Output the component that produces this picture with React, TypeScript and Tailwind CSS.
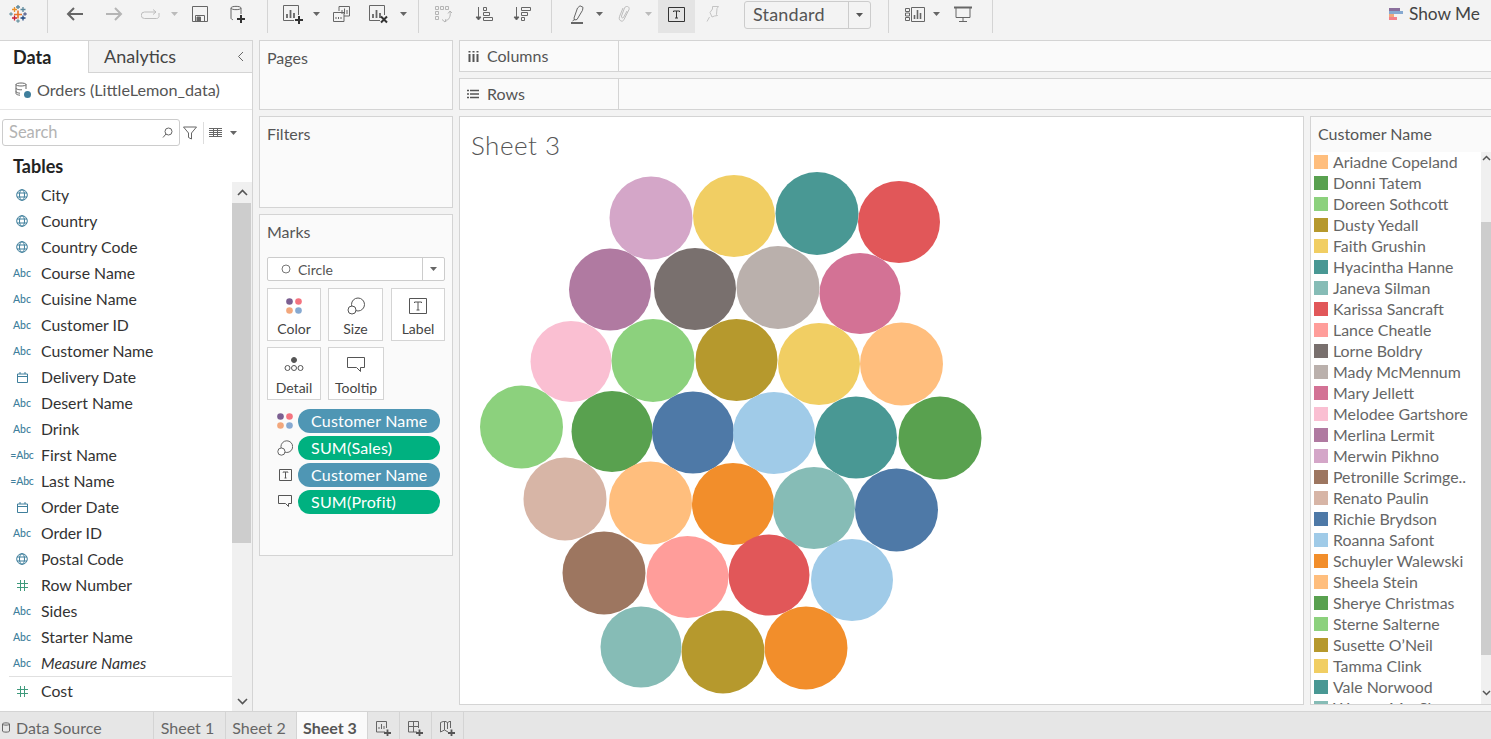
import React from "react";

const S = { fill: "none", stroke: "currentColor", strokeWidth: 1 };

function Ico({ w = 18, h = 18, vb, children, className = "" }: { w?: number; h?: number; vb?: string; children: React.ReactNode; className?: string }) {
  return (
    <svg width={w} height={h} viewBox={vb ?? `0 0 ${w} ${h}`} className={className} {...S}>
      {children}
    </svg>
  );
}

function Caret({ className = "text-[#666]" }: { className?: string }) {
  return (
    <svg width="7" height="4" viewBox="0 0 7 4" className={className}>
      <path d="M0 0h7L3.5 4z" fill="currentColor" />
    </svg>
  );
}

function Slot({ w, children, className = "" }: { w: string; children?: React.ReactNode; className?: string }) {
  return <div className={`flex h-[33px] shrink-0 items-center justify-center pb-[5px] ${w} ${className}`}>{children}</div>;
}

function Sep({ className = "" }: { className?: string }) {
  return <div className={`h-[33px] w-px shrink-0 bg-[#d4d4d4] ${className}`} />;
}

function Logo() {
  const c = (x: number, y: number, r: number, color: string, sw = 1.3) => (
    <path d={`M${x - r} ${y}h${2 * r}M${x} ${y - r}v${2 * r}`} stroke={color} strokeWidth={sw} />
  );
  return (
    <svg width="18" height="18" viewBox="0 0 18 18" fill="none">
      {c(9, 9.500, 4, "#e8762b", 1.600)}
      {c(5.500, 4.500, 2.500, "#eb9129")}
      {c(9, 2, 2, "#5b879b")}
      {c(14, 4.500, 2.500, "#5b879b")}
      {c(5.500, 13, 2.500, "#c72035")}
      {c(14, 13, 2.500, "#1f457e")}
      {c(2, 9, 1.700, "#7099a6")}
      {c(16, 9, 1.700, "#5b6591")}
      {c(9, 16, 1.700, "#7099a6")}
    </svg>
  );
}

function ChartIcon({ add, x }: { add?: boolean; x?: boolean }) {
  return (
    <Ico w={20} h={19} className="text-[#666]">
      <path d="M11 15.500H.5V.5h15V10" />
      <path d="M4 13V9M7.500 13V5M11 13V8" strokeWidth="1.800" />
      {add && <path d="M12 15h8M16 11v8" stroke="#333" strokeWidth="2" />}
      {x && <path d="M12 11.500l6 6M18 11.500l-6 6" stroke="#333" strokeWidth="2" />}
    </Ico>
  );
}

function Toolbar() {
  return (
    <div className="flex h-10 shrink-0 items-start bg-[#f3f3f3]">
      <Slot w="w-9"><Logo /></Slot>
      <div className="w-[11px] shrink-0" />
      <Sep />
      <div className="w-[6px] shrink-0" />
      <Slot w="w-10">
        <Ico w={17} h={14} className="text-[#666]"><path d="M17 7H2M8 1 2 7l6 6" strokeWidth="2" /></Ico>
      </Slot>
      <Slot w="w-10">
        <Ico w={17} h={14} className="text-[#b5b5b5]"><path d="M0 7h15M9 1l6 6-6 6" strokeWidth="2" /></Ico>
      </Slot>
      <Slot w="w-8">
        <Ico w={19} h={11} className="text-[#bdbdbd]"><path d="M15 3H3.500a2.500 2.500 0 0 0 0 6.500h12a2.500 2.500 0 0 0 2.500-3V4M12 .5 15 3l-3 2.500" /></Ico>
      </Slot>
      <Slot w="w-4"><Caret className="text-[#bbb]" /></Slot>
      <Slot w="w-9">
        <Ico w={16} h={16} className="text-[#666]"><path d="M.5.5h15v15H.5z" /><path d="M3.500 15.500v-6h9v6" /><path d="M5 11h3.500v4H5z" fill="#666" /></Ico>
      </Slot>
      <Slot w="w-10">
        <Ico w={16} h={18} className="text-[#666]">
          <path d="M1 3C1 .8 11 .8 11 3V9M1 3c0 2.200 10 2.200 10 0M1 3v10c0 1 1 1.500 2 1.700" />
          <path d="M7 14h8M11 10v8" stroke="#333" strokeWidth="2" />
        </Ico>
      </Slot>
      <div className="w-[9px] shrink-0" />
      <Sep />
      <div className="w-[6px] shrink-0" />
      <Slot w="w-[38px]"><ChartIcon add /></Slot>
      <Slot w="w-2"><Caret /></Slot>
      <Slot w="w-[42px]">
        <Ico w={17} h={16} className="text-[#666]">
          <path d="M6 5V.5h10.500v9.500H11" /><path d="M.5 6.500H11v9H.5z" />
          <path d="M9 8V4M11.500 8V2.500M14 8V4M3 13v-2M5.500 13v-2M8 13v-2" />
        </Ico>
      </Slot>
      <Slot w="w-[34px]"><ChartIcon x /></Slot>
      <Slot w="w-[14px]"><Caret /></Slot>
      <div className="w-2 shrink-0" />
      <Sep />
      <Slot w="w-12">
        <Ico w={17} h={17} className="text-[#b5b5b5]">
          <path d="M.5.5h3v3h-3zM5.500.5h3v3h-3zM10.500.5h3v3h-3zM.5 5.500h3v3h-3zM.5 10.500h3v3h-3z" />
          <path d="M15 6c1 4-1 8-5 9.500M7 13.500l3 2.500 1-3M13 7.500 15 5l2 2" />
        </Ico>
      </Slot>
      <Slot w="w-[34px]">
        <Ico w={18} h={16} className="text-[#666]">
          <path d="M3.500 1v12" /><path d="M1 11h5l-2.500 3z" fill="#555" /><path d="M8.500 1.500h3v3h-3zM8.500 6.500h6v3h-6zM8.500 11.500h9v3h-9z" />
        </Ico>
      </Slot>
      <Slot w="w-[42px]">
        <Ico w={18} h={16} className="text-[#666]">
          <path d="M3.500 1v12" /><path d="M1 11h5l-2.500 3z" fill="#555" /><path d="M8.500 1.500h9v3h-9zM8.500 6.500h6v3h-6zM8.500 11.500h3v3h-3z" />
        </Ico>
      </Slot>
      <div className="w-2 shrink-0" />
      <Sep />
      <div className="w-[9px] shrink-0" />
      <Slot w="w-8">
        <Ico w={13} h={19} className="text-[#666]">
          <path d="M3 13 6.500 3 9 .8l3 1.500-.5 3L6 14.500l-2.500.5zM1.500 16l2-1.500" />
          <path d="M0 18h12" strokeWidth="2" />
        </Ico>
      </Slot>
      <Slot w="w-3"><Caret /></Slot>
      <Slot w="w-[38px]">
        <Ico w={12} h={17} className="text-[#bdbdbd]"><path d="M5 2 1.500 10.500c-1.500 4 3 6.500 4.500 3l5-10c1-3-3-4.500-4.500-1.500L3.500 10c-.5 1.500 1 2.500 2 1.500L9 5" /></Ico>
      </Slot>
      <Slot w="w-[10px]"><Caret className="text-[#bbb]" /></Slot>
      <div className="w-[5px] shrink-0" />
      <Slot w="w-[37px]" className="bg-[#e4e4e4]">
        <Ico w={17} h={15} className="text-[#333]"><path d="M.5.500h16v14H.5z" /><path d="M5.500 5V4h6v1M8.500 4v7M7 11h3" /></Ico>
      </Slot>
      <Slot w="w-[34px]">
        <Ico w={13} h={16} className="text-[#c4c4c4]"><path d="M6.500.5h6l-1.500 2-.5 6 1 1-3 .5-2.500 1-2-4.500L6.500 3zM3.500 11 1 15.500" /></Ico>
      </Slot>
      <div className="w-[15px] shrink-0" />
      <div className="mt-px flex h-[28px] w-[127px] shrink-0 items-center rounded-[3px] border border-[#ccc] text-[18px] text-[#555]">
        <span className="flex-1 pb-[2px] pl-2 leading-none tracking-[0.2px]">Standard</span>
        <div className="flex h-full w-[22px] items-center justify-center border-l border-[#ccc]"><Caret className="text-[#555]" /></div>
      </div>
      <div className="w-[17px] shrink-0" />
      <Sep />
      <div className="w-[10px] shrink-0" />
      <Slot w="w-8">
        <Ico w={20} h={15} className="text-[#666]">
          <path d="M.5 1.500h4v3h-4zM.5 6h4v3h-4zM.5 10.500h4v3h-4zM6.500.5h13v14h-13z" />
          <path d="M9.500 12V8M12.500 12V3M15.500 12V6" strokeWidth="1.600" />
        </Ico>
      </Slot>
      <Slot w="w-[10px]"><Caret /></Slot>
      <Slot w="w-11">
        <Ico w={18} h={17} className="text-[#666]"><path d="M0 1.500h18" strokeWidth="2" /><path d="M2 2v9.500h14V2M9 11.500v4M5 15.500h8" /></Ico>
      </Slot>
      <div className="w-[7px] shrink-0" />
      <Sep />
      <div className="ml-auto flex h-7 items-center gap-[6px] pr-[11px] text-[17.3px] text-[#444]">
        <div className="flex w-[14px] flex-col">
          <div className="h-[3px] w-[11px] bg-[#8a6f9c]" />
          <div className="h-[3px] w-[14px] bg-[#86a9d1]" />
          <div className="h-[3px] w-[5px] bg-[#f2a77c]" />
          <div className="h-[3px] w-[8px] bg-[#f4808a]" />
        </div>
        <span className="leading-none">Show Me</span>
      </div>
    </div>
  );
}

type FieldKind = "geo" | "abc" | "date" | "calc" | "num";
const fields: [FieldKind, string][] = [
  ["geo", "City"], ["geo", "Country"], ["geo", "Country Code"], ["abc", "Course Name"], ["abc", "Cuisine Name"],
  ["abc", "Customer ID"], ["abc", "Customer Name"], ["date", "Delivery Date"], ["abc", "Desert Name"], ["abc", "Drink"],
  ["calc", "First Name"], ["calc", "Last Name"], ["date", "Order Date"], ["abc", "Order ID"], ["geo", "Postal Code"],
  ["num", "Row Number"], ["abc", "Sides"], ["abc", "Starter Name"],
];

function FieldIcon({ kind }: { kind: FieldKind }) {
  if (kind === "abc") return <span className="text-[10.5px] leading-none font-medium text-[#3f7f9c]">Abc</span>;
  if (kind === "calc") return <span className="text-[10.5px] leading-none font-medium text-[#3f7f9c] tracking-[-0.2px]">=Abc</span>;
  if (kind === "geo")
    return (
      <Ico w={12} h={12} className="text-[#3f7f9c]">
        <circle cx="6" cy="6" r="5.300" /><ellipse cx="6" cy="6" rx="2.500" ry="5.300" /><path d="M1 4h10M1 8h10" />
      </Ico>
    );
  if (kind === "date")
    return (
      <Ico w={11} h={11} className="text-[#3f7f9c]"><path d="M.5 2h10v8.500H.5zM.5 4.500h10M3 0v2M8 0v2" /></Ico>
    );
  return (
    <Ico w={11} h={11} className="text-[#3f9a7c]"><path d="M3.500 0v11M7.500 0v11M0 3.500h11M0 7.500h11" /></Ico>
  );
}

function FieldRow({ kind, name, italic }: { kind: FieldKind; name: string; italic?: boolean }) {
  return (
    <div className="flex h-[26px] items-center">
      <div className="flex w-[41px] justify-end pr-[9px]"><div className="flex w-[20px] justify-center"><FieldIcon kind={kind} /></div></div>
      <span className={`text-[15.8px] text-[#333] ${italic ? "italic" : ""}`}>{name}</span>
    </div>
  );
}

function LeftPanel() {
  return (
    <div className="flex w-[253px] shrink-0 flex-col border-t border-r border-[#d4d4d4] bg-white">
      <div className="flex h-[32px] shrink-0">
        <div className="flex w-[88px] items-center pl-[13px] text-[18px] font-bold text-[#222]">Data</div>
        <div className="flex flex-1 items-center justify-between border-b border-l border-[#d4d4d4] bg-[#f3f3f3] pl-[15px] pr-2 text-[18px] text-[#444]">
          <span>Analytics</span>
          <Ico w={7} h={11} className="text-[#666]"><path d="M6 1 1.500 5.500 6 10" /></Ico>
        </div>
      </div>
      <div className="flex h-[37px] shrink-0 items-center gap-[6px] border-b border-[#e6e6e6] pb-px pl-[15px] text-[16.2px] text-[#555]">
        <Ico w={16} h={17} className="text-[#666]">
          <path d="M1 2.500C1 .5 11 .5 11 2.500V7M1 2.500c0 2 10 2 10 0M1 2.500v9c0 1 2 1.500 4 1.700M1 6c0 1.500 4 2 6 1.700M1 9.500c0 1 2 1.500 4 1.700" />
          <circle cx="12.500" cy="12.500" r="3.500" fill="#3f7f9c" stroke="none" />
        </Ico>
        <span>Orders (LittleLemon_data)</span>
      </div>
      <div className="flex h-[44px] shrink-0 items-center pl-[2px] pt-[1px]">
        <div className="flex h-[27px] w-[178px] items-center justify-between rounded-[3px] border border-[#ccc] pl-[6px] pr-[6px] text-[16.500px] text-[#b3b3b3]">
          <span>Search</span>
          <Ico w={11} h={11} className="text-[#666]"><circle cx="6.500" cy="4.500" r="3.500" /><path d="M4 7l-3 3.500" /></Ico>
        </div>
        <div className="ml-[2px] flex w-[16px] justify-center">
          <Ico w={14} h={14} className="text-[#666]"><path d="M.5 1h13L8.500 7v6l-3-1.500V7z" /></Ico>
        </div>
        <div className="ml-[5px] h-[22px] w-px bg-[#ddd]" />
        <div className="ml-[5px]">
          <Ico w={13} h={9} className="text-[#666]"><path d="M0 .5h13M0 2.500h13M0 4.500h13M0 6.500h13M0 8.500h13M4.500 0v9M8.500 0v9" /></Ico>
        </div>
        <div className="ml-[8px]"><Caret /></div>
      </div>
      <div className="flex h-[28px] shrink-0 items-center pl-[13px] pb-[4px] text-[18px] font-bold text-[#222]">Tables</div>
      <div className="flex min-h-0 flex-1">
        <div className="w-[232px] shrink-0 overflow-hidden">
          {fields.map(([k, n]) => <FieldRow key={n} kind={k} name={n} />)}
          <FieldRow kind="abc" name="Measure Names" italic />
          <div className="ml-[9px] h-px bg-[#e0e0e0]" />
          <div className="pt-[1px]"><FieldRow kind="num" name="Cost" /></div>
        </div>
        <div className="flex w-5 flex-col bg-[#f0f0f0]">
          <div className="flex h-[21px] items-center justify-center">
            <Ico w={11} h={7} className="text-[#555]"><path d="M1 6l4.500-4.500L10 6" strokeWidth="1.600" /></Ico>
          </div>
          <div className="h-[340px] w-[19px] bg-[#cdcdcd]" />
          <div className="flex flex-1 items-end justify-center pb-[6px]">
            <Ico w={11} h={7} className="text-[#555]"><path d="M1 1l4.500 4.500L10 1" strokeWidth="1.600" /></Ico>
          </div>
        </div>
      </div>
    </div>
  );
}

function Card({ label, w, children }: { label: string; w: string; children: React.ReactNode }) {
  return (
    <div className={`flex h-[53px] flex-col items-center border border-[#d4d4d4] bg-white text-[14px] text-[#444] ${w}`}>
      <div className="flex h-[31px] items-center justify-center pt-[2px]">{children}</div>
      <span className="leading-[17px]">{label}</span>
    </div>
  );
}

function Dots() {
  return (
    <svg width="16" height="16" viewBox="0 0 16 16">
      <circle cx="3.500" cy="3.500" r="3.300" fill="#7b5f91" />
      <circle cx="12.500" cy="3.500" r="3.300" fill="#f4737f" />
      <circle cx="3.500" cy="12.500" r="3.300" fill="#f2a77c" />
      <circle cx="12.500" cy="12.500" r="3.300" fill="#86a9d1" />
    </svg>
  );
}

const SizeIcon = () => (
  <Ico w={18} h={18} className="text-[#555]"><circle cx="11" cy="7.500" r="6.500" /><circle cx="5" cy="13" r="4" fill="#fff" /></Ico>
);
const LabelIcon = () => (
  <Ico w={18} h={16} className="text-[#555]"><path d="M.5.5h17v15H.5z" /><path d="M5.500 5V4h7v1M9 4v8M7.500 12h3" /></Ico>
);
const TipIcon = () => (
  <Ico w={18} h={16} className="text-[#555]"><path d="M.5.5h17v10h-4v4l-4-4H.5z" /></Ico>
);

function Pill({ icon, label, green }: { icon: React.ReactNode; label: string; green?: boolean }) {
  return (
    <div className="flex h-[27px] items-center">
      <div className="flex w-[38px] justify-end pr-[5px]"><div className="flex w-[16px] justify-center">{icon}</div></div>
      <div className={`flex h-6 w-[142px] items-center rounded-full pl-[13px] text-[16px] tracking-[0.2px] text-white ${green ? "bg-[#00b180]" : "bg-[#4f96b4]"}`}>{label}</div>
    </div>
  );
}

function ShelfTitle({ children, h }: { children: string; h: string }) {
  return <div className={`border border-[#d4d4d4] bg-[#fafafa] pl-[7px] pt-[7px] text-[16px] leading-5 text-[#555] ${h}`}>{children}</div>;
}

function MiddlePanel() {
  return (
    <div className="ml-[6px] flex w-[194px] shrink-0 flex-col gap-[6px]">
      <ShelfTitle h="h-[70px]">Pages</ShelfTitle>
      <ShelfTitle h="h-[92px]">Filters</ShelfTitle>
      <div className="flex h-[342px] flex-col border border-[#d4d4d4] bg-[#fafafa] px-[7px]">
        <div className="h-[42px] pt-[7px] text-[16px] leading-5 text-[#555]">Marks</div>
        <div className="flex h-6 w-[178px] items-center rounded-[2px] border border-[#ccc] bg-white text-[14px] text-[#555]">
          <Ico w={10} h={10} className="ml-[13px] text-[#777]"><circle cx="5" cy="5" r="4" /></Ico>
          <span className="ml-[7px] flex-1">Circle</span>
          <div className="flex h-full w-[22px] items-center justify-center border-l border-[#ccc]"><Caret /></div>
        </div>
        <div className="mt-[7px] flex gap-[7px]">
          <Card label="Color" w="w-[54px]"><Dots /></Card>
          <Card label="Size" w="w-[55px]"><SizeIcon /></Card>
          <Card label="Label" w="w-[54px] ml-px"><LabelIcon /></Card>
        </div>
        <div className="mt-[6px] flex gap-[7px]">
          <Card label="Detail" w="w-[54px]">
            <Ico w={20} h={15} className="text-[#555]">
              <circle cx="10" cy="3" r="2.500" fill="#555" /><circle cx="3.500" cy="11" r="2.500" /><circle cx="10" cy="11" r="2.500" /><circle cx="16.500" cy="11" r="2.500" />
            </Ico>
          </Card>
          <Card label="Tooltip" w="w-[56px]"><TipIcon /></Card>
        </div>
        <div className="-ml-[7px] mt-[7px]">
          <Pill icon={<Dots />} label="Customer Name" />
          <Pill icon={<div className="scale-90"><SizeIcon /></div>} label="SUM(Sales)" green />
          <Pill icon={<Ico w={13} h={12} className="text-[#555]"><path d="M.5.5h12v11H.5z" /><path d="M4 3.500V3h5v.5M6.500 3v6M5.500 9h2" /></Ico>} label="Customer Name" />
          <Pill icon={<Ico w={14} h={13} className="text-[#555]"><path d="M.5.5h13v8h-3v3l-3-3H.5z" /></Ico>} label="SUM(Profit)" green />
        </div>
      </div>
    </div>
  );
}

function RowShelf({ label, icon }: { label: string; icon: React.ReactNode }) {
  return (
    <div className="flex h-[32px] shrink-0 border border-r-0 border-[#d4d4d4] bg-[#fafafa]">
      <div className="flex w-[159px] items-center border-r border-[#d4d4d4] pl-[7px] text-[16px] text-[#555]">
        <div className="flex w-[12px] justify-center">{icon}</div>
        <span className="ml-[8px]">{label}</span>
      </div>
    </div>
  );
}

const circles: [number, number, number, string][] = [
  [651, 218, 41.5, "#d4a6c8"], [734, 216, 41, "#f1ce63"], [817, 213.500, 41.500, "#499894"], [899, 222, 41, "#e15759"],
  [610, 289.500, 41, "#b07aa1"], [695, 289, 41, "#79706e"], [778, 287.500, 41.500, "#bab0ac"], [860, 293.500, 40.500, "#d37295"],
  [571, 361.500, 40.500, "#fabfd2"], [653, 360.500, 41.500, "#8cd17d"], [736.500, 360, 41, "#b6992d"], [819, 364, 41, "#f1ce63"], [901.500, 364, 41.500, "#ffbe7d"],
  [521.500, 427, 41.500, "#8cd17d"], [612, 431.500, 40.500, "#59a14f"], [693, 432.500, 41, "#4e79a7"], [774, 433, 41, "#a0cbe8"], [856, 437.500, 41, "#499894"], [940, 438, 41.500, "#59a14f"],
  [565, 499, 41.500, "#d7b5a6"], [650.500, 503, 41.500, "#ffbe7d"], [733, 504, 41, "#f28e2b"], [814, 508, 41, "#86bcb6"], [896.500, 510, 41.500, "#4e79a7"],
  [604, 573, 41.500, "#9d7660"], [687.500, 577, 41, "#ff9d9a"], [769, 575, 40.500, "#e15759"], [852, 580, 41, "#a0cbe8"],
  [641, 647, 40.500, "#86bcb6"], [723, 652, 41.500, "#b6992d"], [806, 648, 41.500, "#f28e2b"],
];

const legend: [string, string][] = [
  ["#ffbe7d", "Ariadne Copeland"], ["#59a14f", "Donni Tatem"], ["#8cd17d", "Doreen Sothcott"], ["#b6992d", "Dusty Yedall"],
  ["#f1ce63", "Faith Grushin"], ["#499894", "Hyacintha Hanne"], ["#86bcb6", "Janeva Silman"], ["#e15759", "Karissa Sancraft"],
  ["#ff9d9a", "Lance Cheatle"], ["#79706e", "Lorne Boldry"], ["#bab0ac", "Mady McMennum"], ["#d37295", "Mary Jellett"],
  ["#fabfd2", "Melodee Gartshore"], ["#b07aa1", "Merlina Lermit"], ["#d4a6c8", "Merwin Pikhno"], ["#9d7660", "Petronille Scrimge.."],
  ["#d7b5a6", "Renato Paulin"], ["#4e79a7", "Richie Brydson"], ["#a0cbe8", "Roanna Safont"], ["#f28e2b", "Schuyler Walewski"],
  ["#ffbe7d", "Sheela Stein"], ["#59a14f", "Sherye Christmas"], ["#8cd17d", "Sterne Salterne"], ["#b6992d", "Susette O’Neil"],
  ["#f1ce63", "Tamma Clink"], ["#499894", "Vale Norwood"], ["#86bcb6", "Warren MacShane"],
];

function SheetArea() {
  return (
    <div className="flex min-h-0 flex-1 gap-[6px] pb-[6px]">
      <div className="flex w-[845px] shrink-0 flex-col border border-[#d4d4d4] bg-white">
        <div className="h-[51px] shrink-0 pl-[11px] pt-[10px] text-[26px] font-light leading-9 tracking-[0.5px] text-[#555]">Sheet 3</div>
        <svg width="843" height="536" viewBox="460 168 843 536">
          {circles.map(([x, y, r, c], i) => <circle key={i} cx={x} cy={y} r={r} fill={c} />)}
        </svg>
      </div>
      <div className="flex min-w-0 flex-1 flex-col border-y border-l border-[#d4d4d4] bg-[#fafafa]">
        <div className="h-[35px] shrink-0 pl-[7px] pt-[7px] text-[16px] leading-5 text-[#555]">Customer Name</div>
        <div className="flex min-h-0 flex-1">
          <div className="w-[170px] shrink-0 overflow-hidden bg-white">
            {legend.map(([c, n]) => (
              <div key={n} className="-mt-px flex h-[22px] items-center pl-[3px] text-[15.9px] text-[#666]">
                <div className="h-[14px] w-[14px] shrink-0" style={{ backgroundColor: c }} />
                <span className="ml-[5px] whitespace-nowrap">{n}</span>
              </div>
            ))}
          </div>
          <div className="flex flex-1 flex-col bg-[#f0f0f0]">
            <div className="flex h-[70px] items-start justify-center pt-[3px]">
              <Ico w={9} h={6} className="text-[#555]"><path d="M1 5l3.500-3.500L8 5" strokeWidth="1.500" /></Ico>
            </div>
            <div className="h-[433px] bg-[#cdcdcd]" />
            <div className="flex flex-1 items-end justify-center pb-[8px]">
              <Ico w={9} h={6} className="text-[#555]"><path d="M1 1l3.500 3.500L8 1" strokeWidth="1.500" /></Ico>
            </div>
          </div>
        </div>
      </div>
    </div>
  );
}

function Tab({ w, children, active, icon }: { w: string; children: React.ReactNode; active?: boolean; icon?: boolean }) {
  return (
    <div className={`flex h-full shrink-0 items-center justify-center border-r border-[#d4d4d4] text-[16px] ${icon ? "pt-[6px]" : "pt-[4px] pr-[4px]"} ${w} ${active ? "bg-[#fafafa] font-bold text-[#555]" : "text-[#666]"}`}>
      {children}
    </div>
  );
}

function BottomBar() {
  return (
    <div className="flex h-[28px] shrink-0 border-t border-[#d4d4d4] bg-[#e6e6e6]">
      <div className="flex h-full w-[154px] shrink-0 items-center gap-[6px] border-r border-[#d4d4d4] pl-[2px] pt-[4px] text-[16px] text-[#666]">
        <Ico w={8} h={11} className="text-[#666]"><path d="M.5 2C.5.5 7.500.5 7.500 2v7c0 1.500-7 1.500-7 0zM.5 2c0 1.500 7 1.500 7 0" /></Ico>
        <span>Data Source</span>
      </div>
      <Tab w="w-[72px]">Sheet 1</Tab>
      <Tab w="w-[71px]">Sheet 2</Tab>
      <Tab w="w-[71px]" active>Sheet 3</Tab>
      <Tab w="w-[32px]" icon>
        <Ico w={15} h={15} className="text-[#666]"><path d="M9 11H.5V.5h10V7M3 8V6M5.500 8V3M8 8V5" /><path d="M8 12h7M11.500 8.500v7" stroke="#555" strokeWidth="1.800" /></Ico>
      </Tab>
      <Tab w="w-[32px]" icon>
        <Ico w={15} h={15} className="text-[#666]"><path d="M9 11H.5V.5h10V7M.5 5.500h10M5.500.5V11" /><path d="M8 12h7M11.500 8.500v7" stroke="#555" strokeWidth="1.800" /></Ico>
      </Tab>
      <Tab w="w-[32px]" icon>
        <Ico w={15} h={15} className="text-[#666]"><path d="M8 11 4.500 9 .5 11V1.500l4-1.500 3 1.500 3-1.500V7M4.500 0v9M7.500 1.500V8" /><path d="M8 12h7M11.500 8.500v7" stroke="#555" strokeWidth="1.800" /></Ico>
      </Tab>
    </div>
  );
}

export default function App() {
  return (
    <div className="flex h-[739px] w-[1491px] flex-col overflow-hidden bg-[#f3f3f3] font-['Lato','Noto_Sans',sans-serif]">
      <Toolbar />
      <div className="flex min-h-0 flex-1">
        <LeftPanel />
        <MiddlePanel />
        <div className="ml-[6px] flex min-w-0 flex-1 flex-col gap-[6px]">
          <RowShelf
            label="Columns"
            icon={<Ico w={11} h={11} className="text-[#555]"><path d="M1.500 3v8M5.500 3v8M9.500 3v8M1.500 0v1.500M5.500 0v1.500M9.500 0v1.500" strokeWidth="2" /></Ico>}
          />
          <RowShelf
            label="Rows"
            icon={<Ico w={12} h={10} className="text-[#555]"><path d="M3 1.500h9M3 5h9M3 8.500h9M0 1.500h2M0 5h2M0 8.500h2" strokeWidth="1.600" /></Ico>}
          />
          <SheetArea />
        </div>
      </div>
      <BottomBar />
    </div>
  );
}
